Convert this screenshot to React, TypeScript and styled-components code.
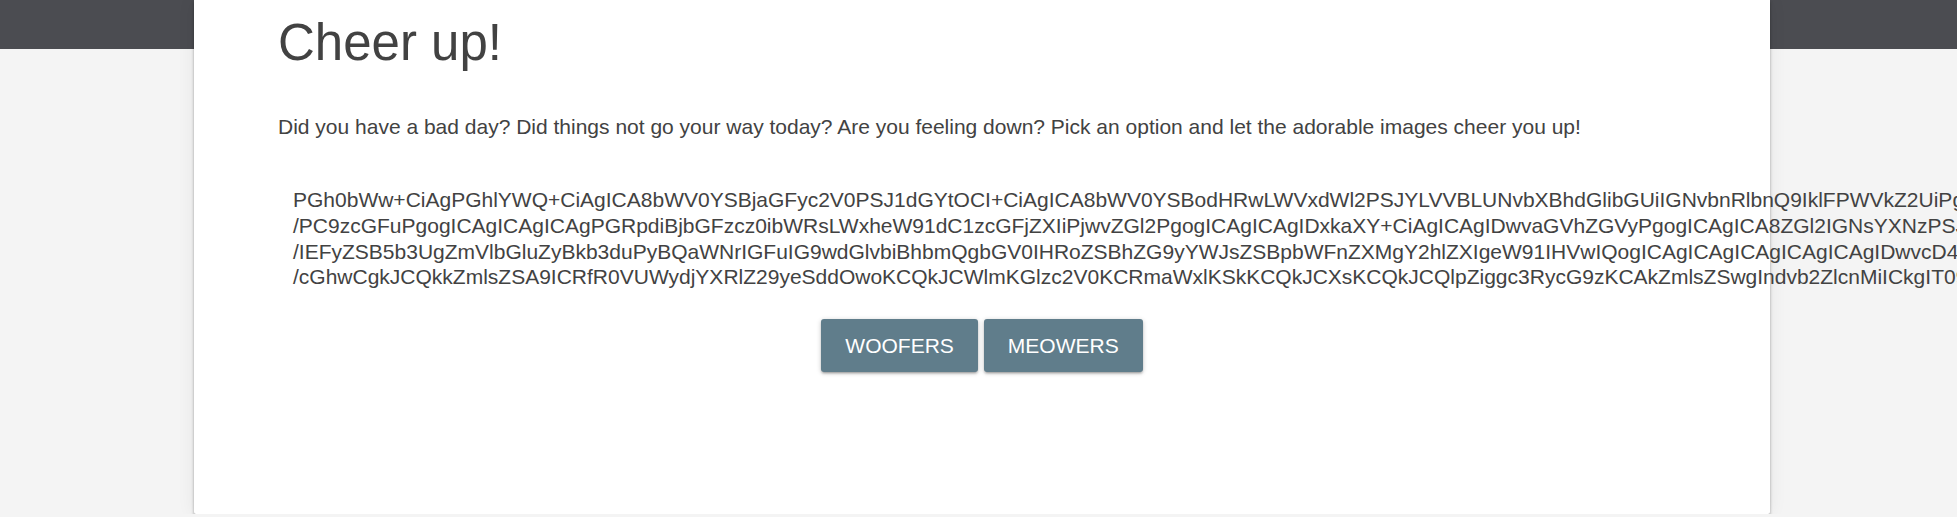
import React, { FC } from 'react';
import styled, { createGlobalStyle } from 'styled-components';

const ENCODED_LINES = [
  'PGh0bWw+CiAgPGhlYWQ+CiAgICA8bWV0YSBjaGFyc2V0PSJ1dGYtOCI+CiAgICA8bWV0YSBodHRwLWVxdWl2PSJYLVVBLUNvbXBhdGlibGUiIGNvbnRlbnQ9IklFPWVkZ2UiPgoKICAgIDxtZXRhIG5hbWU9InZpZXdwb3J0IiBjb250ZW50PSJ3aWR0aD1kZXZpY2Utd2lkdGgi',
  '/PC9zcGFuPgogICAgICAgICAgPGRpdiBjbGFzcz0ibWRsLWxheW91dC1zcGFjZXIiPjwvZGl2PgogICAgICAgIDxkaXY+CiAgICAgIDwvaGVhZGVyPgogICAgICA8ZGl2IGNsYXNzPSJtZGwtbGF5b3V0X19kcmF3ZXIiPgogICAgICAgIDxzcGFuIGNsYXNzPSJtZGwtbGF5b3V0',
  '/IEFyZSB5b3UgZmVlbGluZyBkb3duPyBQaWNrIGFuIG9wdGlvbiBhbmQgbGV0IHRoZSBhZG9yYWJsZSBpbWFnZXMgY2hlZXIgeW91IHVwIQogICAgICAgICAgICAgICAgIDwvcD4KICAgICAgICAgICAgICAgIDxibG9ja3F1b3RlPgogICAgICAgICAgICAgICAgPD9w',
  '/cGhwCgkJCQkkZmlsZSA9ICRfR0VUWydjYXRlZ29yeSddOwoKCQkJCWlmKGlzc2V0KCRmaWxlKSkKCQkJCXsKCQkJCQlpZiggc3RycG9zKCAkZmlsZSwgIndvb2ZlcnMiICkgIT09IGZhbHNlICkKCQkJCQl7CgkJCQkJCWluY2x1ZGUoJGZpbGUpOwoJCQkJCX0K',
];

const CATEGORIES = ['Woofers', 'Meowers'];

const App: FC = () => {
  return (
    <>
      <GlobalStyle />
      <TopBar />
      <Card>
        <Title>Cheer up!</Title>
        <Intro>
          Did you have a bad day? Did things not go your way today? Are you
          feeling down? Pick an option and let the adorable images cheer you
          up!
        </Intro>
        <Encoded>
          {ENCODED_LINES.map((line) => (
            <EncodedLine key={line}>{line}</EncodedLine>
          ))}
        </Encoded>
        <Actions>
          {CATEGORIES.map((name) => (
            <Button key={name}>{name}</Button>
          ))}
        </Actions>
      </Card>
    </>
  );
};

export default App;

const HEADER_HEIGHT = 49;
const TEXT_COLOR = '#424242';

const GlobalStyle = createGlobalStyle`
  html, body {
    margin: 0;
    padding: 0;
    background-color: #f4f4f4;
    overflow: hidden;
  }
  body {
    font-family: "Liberation Sans", Arial, sans-serif;
    color: ${TEXT_COLOR};
  }
`;

const TopBar = styled.header`
  height: ${HEADER_HEIGHT}px;
  background-color: #4b4c51;
`;

const Card = styled.main`
  position: relative;
  box-sizing: border-box;
  width: 1576px;
  min-height: 514px;
  margin: -${HEADER_HEIGHT}px 0 0 194px;
  padding: 15px 84px 0;
  background-color: #fff;
  border-radius: 0 0 2px 2px;
  box-shadow: 0 2px 3px rgba(0, 0, 0, 0.35), 0 0 18px rgba(0, 0, 0, 0.07);
`;

const Title = styled.h1`
  margin: 0;
  font-size: 51px;
  font-weight: 400;
  line-height: 56px;
`;

const Intro = styled.p`
  margin: 43px 0 0;
  font-size: 21px;
  line-height: 26px;
`;

const Encoded = styled.div`
  margin-top: 47px;
  padding-left: 15px;
  font-size: 21px;
  line-height: 25.8px;
`;

const EncodedLine = styled.div`
  white-space: nowrap;
`;

const Actions = styled.div`
  display: flex;
  justify-content: center;
  gap: 6px;
  margin-top: 29px;
`;

const Button = styled.button`
  height: 53px;
  padding: 0 24px;
  border: none;
  border-radius: 3px;
  background-color: #607d8b;
  color: #fff;
  font-family: inherit;
  font-size: 21px;
  text-transform: uppercase;
  cursor: pointer;
  box-shadow: 0 2px 2px rgba(0, 0, 0, 0.14), 0 3px 1px -2px rgba(0, 0, 0, 0.12),
    0 1px 5px rgba(0, 0, 0, 0.2);
  &:hover {
    background-color: #6f8c99;
  }
`;
